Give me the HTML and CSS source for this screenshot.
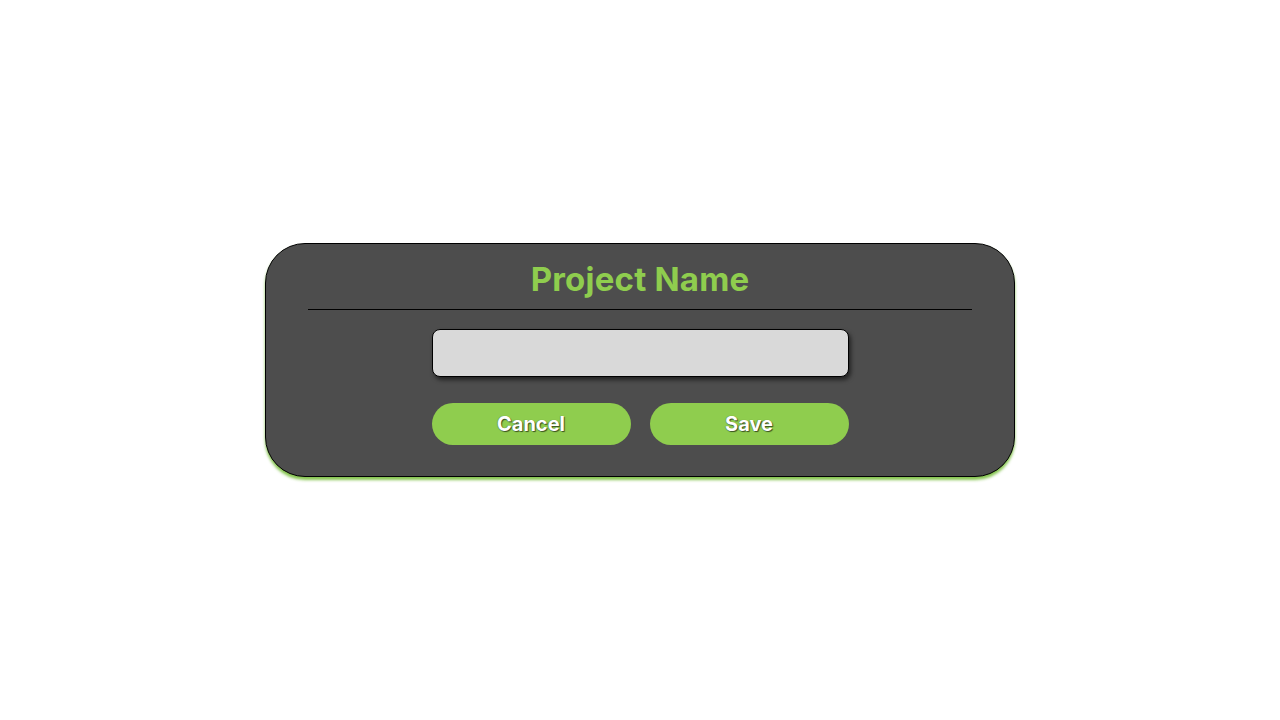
FILE: index.html
```html
<!DOCTYPE html>
<html lang="en">
<head>
<meta charset="utf-8">
<title>Project Name</title>
<link rel="stylesheet" href="styles.css">
</head>
<body>
<main class="stage">
  <section class="dialog">
    <h1 class="dialog-title">Project Name</h1>
    <hr class="dialog-rule">
    <input class="name-input" type="text" aria-label="Project name">
    <div class="actions">
      <button class="btn" type="button">Cancel</button>
      <button class="btn" type="button">Save</button>
    </div>
  </section>
</main>
</body>
</html>
```

FILE: styles.css
```css
* { box-sizing: border-box; }
html, body { margin: 0; padding: 0; background: #ffffff; }
body { font-family: "Inter", "Noto Sans", sans-serif; }
.stage {
  width: 1280px;
  height: 720px;
  display: flex;
  align-items: flex-start;
  justify-content: center;
  padding-top: 243px;
}
.dialog {
  width: 750px;
  height: 234px;
  background: #4d4d4d;
  border: 1px solid #000;
  border-radius: 40px;
  box-shadow: 0 3px 3px rgba(120, 190, 60, 0.9);
  display: flex;
  flex-direction: column;
  align-items: center;
  padding: 15px 42px 0;
}
.dialog-title {
  margin: 0;
  font-size: 33px;
  line-height: 40px;
  font-weight: 700;
  color: #8fcd4e;
  letter-spacing: 0.2px;
}
.dialog-rule {
  width: 664px;
  margin: 10px 0 0;
  border: 0;
  border-top: 1px solid #000;
  height: 0;
}
.name-input {
  margin-top: 19px;
  width: 417px;
  height: 48px;
  background: #d9d9d9;
  border: 1px solid #000;
  border-radius: 8px;
  box-shadow: 2px 3px 4px rgba(0, 0, 0, 0.55);
  outline: none;
}
.actions {
  margin-top: 26px;
  display: flex;
  gap: 19px;
}
.btn {
  width: 199px;
  height: 42px;
  border: 0;
  border-radius: 21px;
  background: #8fcd4e;
  color: #fff;
  font-family: "Inter", "Noto Sans", sans-serif;
  font-weight: 700;
  font-size: 20px;
  padding: 0;
  text-shadow: 1px 1px 1px rgba(0, 0, 0, 0.6), -0.5px -0.5px 1px rgba(0, 0, 0, 0.3);
}
```
